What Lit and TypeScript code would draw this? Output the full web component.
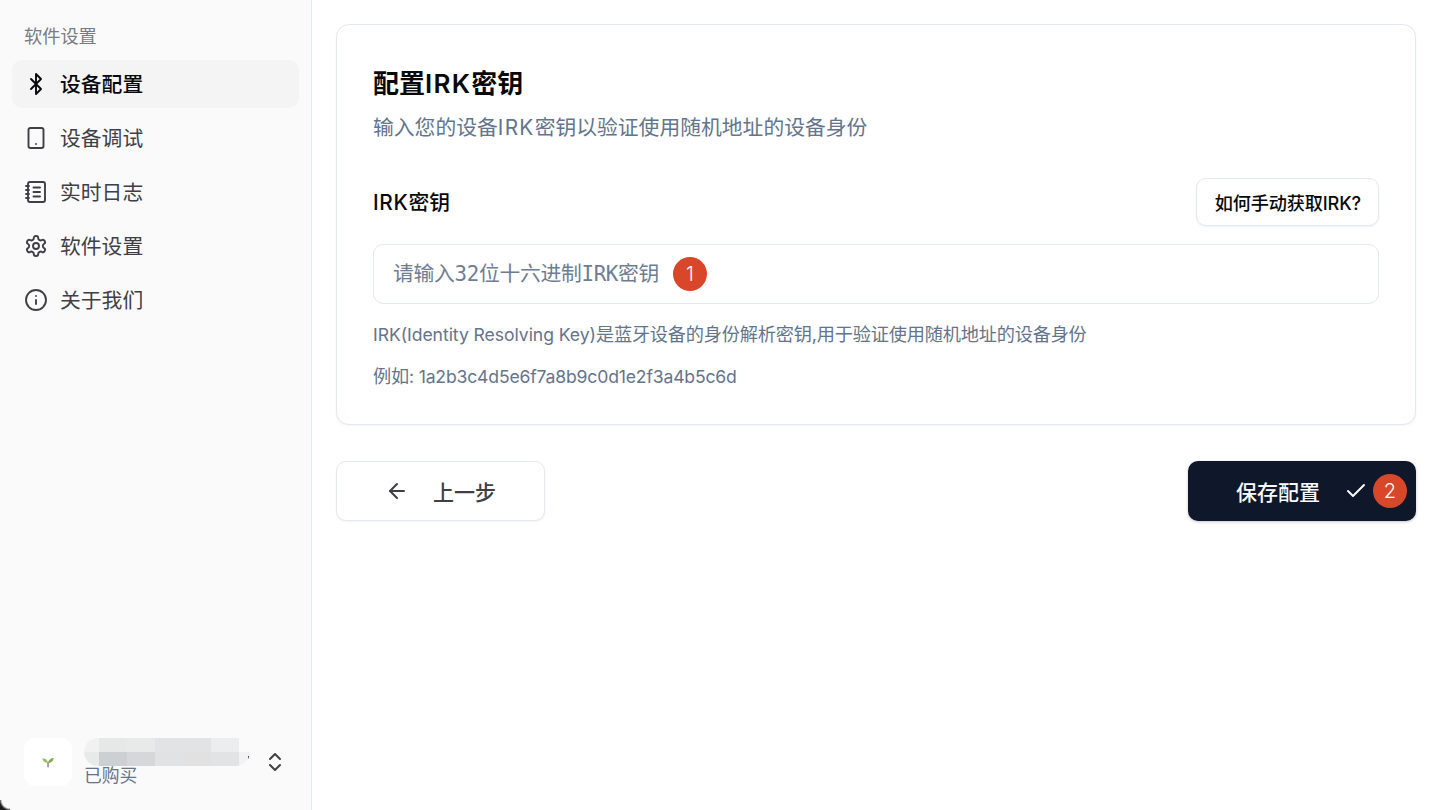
import { LitElement, html, css, svg } from "lit";
import { customElement } from "lit/decorators.js";

const icons: Record<string, unknown> = {
  bluetooth: svg`<path d="m7 7 10 10-5 5V2l5 5L7 17"/>`,
  phone: svg`<rect x="4.5" y="2" width="15" height="20" rx="2"/><path d="M12 18h.01"/>`,
  notebook: svg`<path d="M2 6h3M2 10h3M2 14h3M2 18h3"/><rect x="4" y="2" width="17" height="20" rx="2"/><path d="M9.5 7.5H16M9.5 12H16M9.5 16.5H16"/>`,
  settings: svg`<path d="M12.22 2h-.44a2 2 0 0 0-2 2v.18a2 2 0 0 1-1 1.73l-.43.25a2 2 0 0 1-2 0l-.15-.08a2 2 0 0 0-2.73.73l-.22.38a2 2 0 0 0 .73 2.73l.15.1a2 2 0 0 1 1 1.72v.51a2 2 0 0 1-1 1.74l-.15.09a2 2 0 0 0-.73 2.73l.22.38a2 2 0 0 0 2.73.73l.15-.08a2 2 0 0 1 2 0l.43.25a2 2 0 0 1 1 1.73V20a2 2 0 0 0 2 2h.44a2 2 0 0 0 2-2v-.18a2 2 0 0 1 1-1.73l.43-.25a2 2 0 0 1 2 0l.15.08a2 2 0 0 0 2.73-.73l.22-.39a2 2 0 0 0-.73-2.73l-.15-.08a2 2 0 0 1-1-1.74v-.5a2 2 0 0 1 1-1.74l.15-.09a2 2 0 0 0 .73-2.73l-.22-.38a2 2 0 0 0-2.73-.73l-.15.08a2 2 0 0 1-2 0l-.43-.25a2 2 0 0 1-1-1.73V4a2 2 0 0 0-2-2z"/><circle cx="12" cy="12" r="3"/>`,
  info: svg`<circle cx="12" cy="12" r="10"/><path d="M12 16v-4"/><path d="M12 8h.01"/>`,
  chevrons: svg`<path d="m7 15 5 5 5-5"/><path d="m7 9 5-5 5 5"/>`,
  left: svg`<path d="m12 19-7-7 7-7"/><path d="M19 12H5"/>`,
  check: svg`<path d="M20 6 9 17l-5-5"/>`,
};

const icon = (name: string, cls = "") =>
  html`<svg class="icon ${cls}" viewBox="0 0 24 24" fill="none" stroke="currentColor" stroke-width="2" stroke-linecap="round" stroke-linejoin="round">${icons[name]}</svg>`;

const nav = [
  { icon: "bluetooth", label: "设备配置", active: true },
  { icon: "phone", label: "设备调试" },
  { icon: "notebook", label: "实时日志" },
  { icon: "settings", label: "软件设置" },
  { icon: "info", label: "关于我们" },
];

const blurTop = ["#f0f1f0", "#e6e8e8", "#e8e9e9", "#e2e3e4", "#e2e3e4", "#ecedee", "#fafafa"];
const blurBottom = ["#e8e9e9", "#cdd0d3", "#d5d7d8", "#e1e2e3", "#e1e1e2", "#e2e3e4", "#f2f2f3"];

@customElement("app-root")
export class AppRoot extends LitElement {
  static styles = css`
    :host {
      display: block;
      position: relative;
      height: 810px;
      overflow: hidden;
      background: #fff;
      font-family: Inter, "Noto Sans CJK SC", sans-serif;
      color: #09090b;
    }
    .layout { display: flex; height: 100%; }
    .sidebar {
      width: 312px;
      box-sizing: border-box;
      flex: none;
      display: flex;
      flex-direction: column;
      background: #fafafa;
      border-right: 1px solid #e4e8f0;
      padding: 24px 12px;
    }
    .group-title {
      font-size: 18.2px;
      line-height: 24px;
      color: #7b7b83;
      padding-left: 12px;
      margin-bottom: 12px;
    }
    .nav { display: flex; flex-direction: column; gap: 6px; }
    .item {
      display: flex;
      align-items: center;
      gap: 12px;
      height: 48px;
      width: 287px;
      padding-left: 12px;
      box-sizing: border-box;
      border-radius: 10px;
      font-size: 20.8px;
      color: #3f3f46;
    }
    .item span { padding-bottom: 2px; }
    .item.active { background: #f4f4f5; color: #09090b; font-weight: 500; }
    .icon { width: 24px; height: 24px; flex: none; display: block; }
    .item .icon { stroke-width: 1.9; }
    .foot {
      margin-top: auto;
      display: flex;
      align-items: center;
      padding-left: 12px;
      height: 48px;
    }
    .logo {
      width: 48px;
      height: 48px;
      border-radius: 11px;
      background: #fff;
      flex: none;
      display: flex;
      align-items: center;
      justify-content: center;
    }
    .logo svg { width: 14px; height: 14px; display: block; }
    .who { margin-left: 12px; width: 180px; flex: none; }
    .blur {
      display: grid;
      grid-template-columns: 15px 28px 28px 28px 28px 28px 11px;
      grid-template-rows: 14px 14px;
      width: 166px;
      margin-top: -1px;
      border-radius: 14px;
      overflow: hidden;
      position: relative;
    }
    .blur i { display: block; }
    .dot {
      position: absolute;
      right: 1px;
      top: 18px;
      width: 1px;
      height: 3px;
      background: #3a4a8a;
    }
    .plan {
      font-size: 17.8px;
      line-height: 20px;
      color: #64748b;
    }
    .chev { color: #3f3f46; margin-left: -1px; }
    .main { flex: 1; padding: 24px; box-sizing: border-box; }
    .card {
      width: 1080px;
      box-sizing: border-box;
      background: #fff;
      border: 1px solid #e4e8f0;
      border-radius: 13px;
      padding: 42px 36px 35px;
      box-shadow: 0 1px 2px rgba(15, 23, 42, 0.05);
    }
    h1 {
      margin: 0;
      font-size: 26px;
      line-height: 34px;
      font-weight: 600;
    }
    h1 b { font-weight: inherit; letter-spacing: 1.3px; }
    .sub {
      margin: 13px 0 0;
      font-size: 20.8px;
      line-height: 28px;
      color: #64748b;
    }
    .sub b { font-weight: inherit; letter-spacing: 1.3px; }
    .label-row {
      margin-top: 36px;
      display: flex;
      align-items: center;
      justify-content: space-between;
    }
    .label { font-size: 20.8px; font-weight: 500; line-height: 28px; padding-top: 2px; }
    .label b { font-weight: inherit; letter-spacing: 0.7px; }
    .help {
      height: 48px;
      padding: 0 17px 0 18px;
      box-sizing: border-box;
      font: inherit;
      font-size: 18.2px;
      font-weight: 500;
      letter-spacing: -0.17px;
      color: #09090b;
      background: #fff;
      border: 1px solid #e4e8f0;
      border-radius: 10px;
      box-shadow: 0 1px 2px rgba(15, 23, 42, 0.07);
    }
    .field { position: relative; margin-top: 18px; }
    input {
      width: 100%;
      height: 60px;
      box-sizing: border-box;
      display: block;
      padding: 0 19px;
      border: 1px solid #e4e8f0;
      border-radius: 10px;
      background: #fff;
      outline: none;
      font-family: "DejaVu Sans Mono", "Noto Sans CJK SC", monospace;
      font-size: 20.8px;
      letter-spacing: -0.3px;
    }
    input::placeholder { color: #6f7d92; opacity: 1; }
    .badge {
      position: absolute;
      width: 34px;
      height: 34px;
      border-radius: 50%;
      background: #d9472b;
      color: #fff;
      font-size: 20px;
      font-weight: 300;
      display: flex;
      align-items: center;
      justify-content: center;
    }
    .field .badge { left: 300px; top: 13px; }
    .hint {
      margin: 17px 0 0;
      font-size: 18.2px;
      line-height: 26px;
      letter-spacing: -0.2px;
      color: #64748b;
    }
    .hint + .hint { margin-top: 16px; }
    .hint b { font-weight: inherit; font-size: 17.6px; line-height: 0; letter-spacing: -0.06px; }
    .hint + .hint b { letter-spacing: -0.17px; }
    .actions {
      margin-top: 36px;
      width: 1080px;
      display: flex;
      justify-content: space-between;
    }
    .btn {
      position: relative;
      height: 60px;
      box-sizing: border-box;
      padding: 0 48px;
      display: flex;
      align-items: center;
      gap: 24px;
      font: inherit;
      font-size: 21px;
      font-weight: 500;
      border-radius: 10px;
    }
    .back {
      background: #fff;
      color: #3f3f46;
      border: 1px solid #e4e8f0;
      box-shadow: 0 1px 2px rgba(15, 23, 42, 0.05);
    }
    .save {
      background: #0f172a;
      color: #f8fafc;
      border: 0;
      box-shadow: 0 1px 3px rgba(15, 23, 42, 0.25);
    }
    .save .badge { right: 9px; top: 13px; }
    .corner {
      position: absolute;
      left: 0;
      bottom: 0;
      width: 10px;
      height: 10px;
      background: radial-gradient(circle at 100% 0, transparent 8px, #1c1c1c 10.5px);
    }
  `;

  render() {
    return html`
      <div class="layout">
        <aside class="sidebar">
          <div class="group-title">软件设置</div>
          <nav class="nav">
            ${nav.map(
              (n) => html`<div class="item ${n.active ? "active" : ""}">${icon(n.icon)}<span>${n.label}</span></div>`
            )}
          </nav>
          <div class="foot">
            <div class="logo">
              <svg viewBox="0 0 14 14">
                <path d="M7 7.2v5" stroke="#6f7a6c" stroke-width="1.3" fill="none"/>
                <path d="M7 8C4.8 8 1.6 6.8 1.4 3.6 4 3.2 6.6 4.6 7 8Z" fill="#9dbb6a"/>
                <path d="M7 8c.2-3 3-5 5.6-5-.1 3-2.6 5-5.6 5Z" fill="#86ab55"/>
              </svg>
            </div>
            <div class="who">
              <div class="blur">
                ${blurTop.map((c) => html`<i style="background:${c}"></i>`)}
                ${blurBottom.map((c) => html`<i style="background:${c}"></i>`)}
                <span class="dot"></span>
              </div>
              <div class="plan">已购买</div>
            </div>
            ${icon("chevrons", "chev")}
          </div>
        </aside>
        <main class="main">
          <section class="card">
            <h1>配置<b>IRK</b>密钥</h1>
            <p class="sub">输入您的设备<b>IRK</b>密钥以验证使用随机地址的设备身份</p>
            <div class="label-row">
              <span class="label"><b>IRK</b>密钥</span>
              <button class="help">如何手动获取IRK?</button>
            </div>
            <div class="field">
              <input placeholder="请输入32位十六进制IRK密钥" />
              <span class="badge">1</span>
            </div>
            <p class="hint"><b>IRK(Identity Resolving Key)</b>是蓝牙设备的身份解析密钥,用于验证使用随机地址的设备身份</p>
            <p class="hint">例如<b>: 1a2b3c4d5e6f7a8b9c0d1e2f3a4b5c6d</b></p>
          </section>
          <div class="actions">
            <button class="btn back">${icon("left")}<span>上一步</span></button>
            <button class="btn save"><span>保存配置</span>${icon("check")}<span class="badge">2</span></button>
          </div>
        </main>
      </div>
      <div class="corner"></div>
    `;
  }
}
